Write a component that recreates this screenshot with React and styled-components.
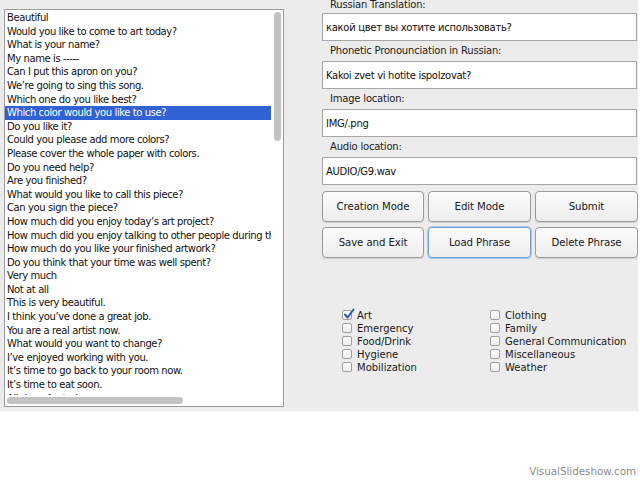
import styled, { createGlobalStyle } from "styled-components";

const GlobalStyle = createGlobalStyle`
  html, body {
    margin: 0;
    padding: 0;
    background: #ffffff;
  }
  body {
    font-family: "DejaVu Sans", "Liberation Sans", sans-serif;
    width: 640px;
    height: 480px;
    overflow: hidden;
  }
`;

const Page = styled.div`
  width: 640px;
  height: 480px;
  position: relative;
  background: #ffffff;
`;

const Window = styled.div`
  width: 638px;
  height: 411px;
  background: #ececec;
  display: flex;
  align-items: flex-start;
  padding-left: 4px;
  box-sizing: border-box;
  overflow: hidden;
`;

const ListBox = styled.div`
  position: relative;
  margin-top: 9px;
  width: 280px;
  height: 398px;
  border: 1px solid #9d9d9d;
  background: #ffffff;
  box-sizing: border-box;
  overflow: hidden;
`;

const ListViewport = styled.div`
  width: 266px;
  height: 384px;
  overflow: hidden;
  padding-top: 1px;
`;

const ListItem = styled.div`
  height: 13.6px;
  line-height: 13.6px;
  font-size: 10px;
  letter-spacing: -0.4px;
  padding-left: 2px;
  white-space: nowrap;
  color: ${(p) => (p.$selected ? "#ffffff" : "#111111")};
  background: ${(p) => (p.$selected ? "#3162d4" : "transparent")};
`;

const VThumb = styled.div`
  position: absolute;
  left: 269px;
  top: 2px;
  width: 7px;
  height: 129px;
  border-radius: 4px;
  background: #c3c3c3;
`;

const HThumb = styled.div`
  position: absolute;
  left: 2px;
  top: 387px;
  width: 176px;
  height: 7px;
  border-radius: 4px;
  background: #c3c3c3;
`;

const Side = styled.div`
  margin-left: 38px;
  width: 315px;
  display: flex;
  flex-direction: column;
  margin-top: -7px;
`;

const FieldLabel = styled.div`
  height: 20px;
  line-height: ${(p) => (p.$first ? "23px" : "20px")};
  padding-left: 8px;
  font-size: 10px;
  letter-spacing: -0.2px;
  color: #222222;
`;

const Field = styled.div`
  height: 28px;
  border: 1px solid #a6a6a6;
  background: #ffffff;
  box-sizing: border-box;
  display: flex;
  align-items: center;
  padding-left: 3px;
  font-size: 10px;
  letter-spacing: -0.3px;
  color: #111111;
`;

const ButtonGrid = styled.div`
  margin-top: 6px;
  display: grid;
  grid-template-columns: 102px 103px 103px;
  grid-auto-rows: 31px;
  column-gap: 4px;
  row-gap: 5px;
`;

const Button = styled.div`
  border: 1px solid ${(p) => (p.$focused ? "#6f9fd6" : "#9a9a9a")};
  border-radius: 4px;
  background: linear-gradient(#fbfbfb, #eeeeee);
  box-shadow: ${(p) =>
    p.$focused ? "0 0 0 1px #a9c8ec, 0 1px 1px rgba(0,0,0,0.15)" : "0 1px 1px rgba(0,0,0,0.12)"};
  display: flex;
  align-items: center;
  justify-content: center;
  font-size: 10.2px;
  letter-spacing: -0.1px;
  color: #1a1a1a;
`;

const Checks = styled.div`
  margin-top: 51px;
  margin-left: 20px;
  display: grid;
  grid-template-columns: 148px 1fr;
  grid-auto-flow: column;
  grid-template-rows: repeat(5, 12.9px);
`;

const CheckRow = styled.div`
  display: flex;
  align-items: center;
  font-size: 10px;
  color: #1a1a1a;
  white-space: nowrap;
`;

const Box = styled.span`
  position: relative;
  width: 10px;
  height: 10px;
  border: 1px solid #a0a0a0;
  border-radius: 2px;
  background: linear-gradient(#ffffff, #ececec);
  box-sizing: border-box;
  margin-right: 5px;
  flex: none;
`;

const Tick = styled.svg`
  position: absolute;
  left: 0px;
  top: -3px;
`;

const Watermark = styled.div`
  position: absolute;
  right: 4px;
  bottom: 3px;
  font-family: "DejaVu Sans", sans-serif;
  font-size: 10.3px;
  color: #8c8c8c;
`;

const phrases = [
  "Beautiful",
  "Would you like to come to art today?",
  "What is your name?",
  "My name is -----",
  "Can I put this apron on you?",
  "We\u2019re going to sing this song.",
  "Which one do you like best?",
  "Which color would you like to use?",
  "Do you like it?",
  "Could you please add more colors?",
  "Please cover the whole paper with colors.",
  "Do you need help?",
  "Are you finished?",
  "What would you like to call this piece?",
  "Can you sign the piece?",
  "How much did you enjoy today\u2019s art project?",
  "How much did you enjoy talking to other people during this project?",
  "How much do you like your finished artwork?",
  "Do you think that your time was well spent?",
  "Very much",
  "Not at all",
  "This is very beautiful.",
  "I think you\u2019ve done a great job.",
  "You are a real artist now.",
  "What would you want to change?",
  "I\u2019ve enjoyed working with you.",
  "It\u2019s time to go back to your room now.",
  "It\u2019s time to eat soon.",
  "All done for today.",
];

const fields = [
  ["Russian Translation:", "какой цвет вы хотите использовать?"],
  ["Phonetic Pronounciation in Russian:", "Kakoi zvet vi hotite ispolzovat?"],
  ["Image location:", "IMG/.png"],
  ["Audio location:", "AUDIO/G9.wav"],
];

const buttons = ["Creation Mode", "Edit Mode", "Submit", "Save and Exit", "Load Phrase", "Delete Phrase"];

const categories = [
  ["Art", true],
  ["Emergency"],
  ["Food/Drink"],
  ["Hygiene"],
  ["Mobilization"],
  ["Clothing"],
  ["Family"],
  ["General Communication"],
  ["Miscellaneous"],
  ["Weather"],
];

export default function App() {
  return (
    <Page>
      <GlobalStyle />
      <Window>
        <ListBox>
          <ListViewport>
            {phrases.map((p, i) => (
              <ListItem key={i} $selected={i === 7}>
                {p}
              </ListItem>
            ))}
          </ListViewport>
          <VThumb />
          <HThumb />
        </ListBox>
        <Side>
          {fields.map(([label, value], i) => (
            <div key={label}>
              <FieldLabel $first={i === 0}>{label}</FieldLabel>
              <Field>{value}</Field>
            </div>
          ))}
          <ButtonGrid>
            {buttons.map((b) => (
              <Button key={b} $focused={b === "Load Phrase"}>
                {b}
              </Button>
            ))}
          </ButtonGrid>
          <Checks>
            {categories.map(([name, checked]) => (
              <CheckRow key={name}>
                <Box>
                  {checked && (
                    <Tick width="12" height="12" viewBox="0 0 12 12">
                      <path d="M2 6.5 L4.6 9.5 L10.5 1.5" fill="none" stroke="#2a56b8" strokeWidth="2" strokeLinecap="round" strokeLinejoin="round" />
                    </Tick>
                  )}
                </Box>
                {name}
              </CheckRow>
            ))}
          </Checks>
        </Side>
      </Window>
      <Watermark>VisualSlideshow.com</Watermark>
    </Page>
  );
}
